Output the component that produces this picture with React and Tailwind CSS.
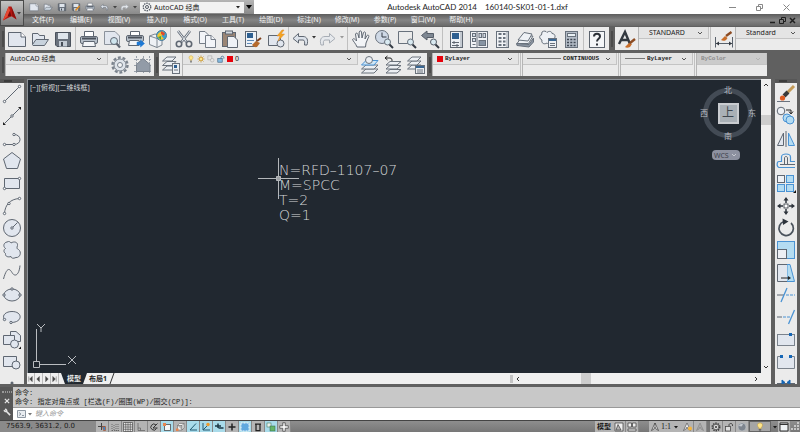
const LINE = '#5f6772'
const FILL = '#e1e6ee'
const BLUE = '#4a93d4'
const SKY = '#b4dcf2'

const icons = {
  new: (
    <g fill={FILL} stroke={LINE}>
      <path d="M1.5 3.5H14L18.5 8V17.5H1.5Z" />
      <path d="M14 3.5V8H18.5" fill="#fff" />
    </g>
  ),
  open: (
    <g fill={FILL} stroke={LINE}>
      <path d="M2.5 15.5V4.5H8L9.5 6.5H14.5V10" />
      <path d="M2.5 15.5L6 10.5H18.5L14.5 16.5H3Z" fill="#c8d2dc" />
    </g>
  ),
  save: (
    <g>
      <path d="M2.5 3.5H17.5V17.5H4L2.5 16Z" fill="#69717c" stroke="#4b525d" />
      <path d="M5 4H15V10H5Z" fill="#dfe5ec" />
      <path d="M6 12H14V17.5H6Z" fill="#c3cbd4" />
      <path d="M8 13H10V17H8Z" fill="#454c56" />
    </g>
  ),
  saveAs: (
    <g>
      <path d="M2.5 3.5H17.5V17.5H4L2.5 16Z" fill="#69717c" stroke="#4b525d" />
      <path d="M5 4H15V10H5Z" fill="#dfe5ec" />
      <path d="M6 12H14V17.5H6Z" fill="#c3cbd4" />
      <path d="M9 17L17 8" stroke="#e08a1e" strokeWidth="3" />
    </g>
  ),
  print: (
    <g stroke={LINE}>
      <path d="M5.5 8V2.5H14.5V8" fill="#fff" />
      <rect x="1.5" y="7.5" width="17" height="7" rx="1.5" fill="#b9c2cc" />
      <path d="M3 9.5H17" stroke="#4a515b" strokeWidth="2" />
      <path d="M4.5 12.5H15.5L16.5 17.5H3.5Z" fill="#f3f5f8" />
    </g>
  ),
  preview: (
    <g fill={FILL} stroke={LINE}>
      <path d="M2.5 2.5H13L17.5 7V15.5H2.5Z" stroke="#8b929b" />
      <circle cx="12" cy="12" r="3.5" fill="#cfe5ee" />
      <path d="M14.5 14.5L18 18.5" strokeWidth="2.2" />
    </g>
  ),
  publish: (
    <g stroke={LINE}>
      <path d="M5.5 7V2.5H14.5V7" fill="#fff" />
      <rect x="1.5" y="6.5" width="17" height="6" rx="1.5" fill="#b9c2cc" />
      <path d="M3 8.5H17" stroke="#4a515b" strokeWidth="2" />
      <path d="M4.5 11.5H14V16.5H3.5Z" fill="#f3f5f8" />
      <path d="M12 13H15.5V11L19.5 14.5L15.5 18V16H12Z" fill="#1d78d4" stroke="#1d78d4" strokeWidth=".5" />
    </g>
  ),
  globe: (
    <g stroke="#7e8791">
      <path d="M1.5 7L7 5L14 7V16L9 18.5L1.5 15.5Z" fill="#eef1f5" />
      <path d="M1.5 7L9 9.5V18.5M9 9.5L14 7" fill="none" />
      <circle cx="13.5" cy="6.5" r="5" fill="#3ba3cf" stroke="#4c7b9b" />
      <path d="M9 7C10 3 13 2 16 3L13.5 7L16 10L12 11Z" fill="#f1c330" stroke="none" />
      <path d="M13 2L17 4L16 7L13 5Z" fill="#df4b2c" stroke="none" />
      <path d="M10 8L13 7V11Z" fill="#42a443" stroke="none" />
    </g>
  ),
  cut: (
    <g fill="none" stroke={LINE}>
      <path d="M4 2L12.5 13M16 2L7.5 13" stroke="#6b737e" strokeWidth="2.6" />
      <path d="M4 2L12.5 13M16 2L7.5 13" stroke="#e7ebf0" strokeWidth="1" />
      <circle cx="5" cy="15" r="2.7" strokeWidth="1.6" />
      <circle cx="15" cy="15" r="2.7" strokeWidth="1.6" />
    </g>
  ),
  copy: (
    <g fill="#f2f4f8" stroke="#757d88">
      <path d="M2.5 2.5H8L11.5 6V14.5H2.5Z" />
      <path d="M8.5 6.5H14L18.5 10.5V18.5H8.5Z" />
      <path d="M14 6.5V10.5H18.5" />
    </g>
  ),
  paste: (
    <g stroke={LINE}>
      <rect x="2.5" y="3.5" width="13" height="14" fill="#9a8575" />
      <rect x="5.5" y="2" width="7" height="3" fill="#d2d8de" />
      <path d="M7.5 7.5H14L17.5 11V18.5H7.5Z" fill="#eef1f6" />
    </g>
  ),
  match: (
    <g>
      <rect x="2.5" y="2.5" width="11" height="15" fill="#edf1f6" stroke={LINE} />
      <rect x="4" y="4" width="6" height="5" fill="#2d5f91" />
      <path d="M4 11.5H11M4 14.5H9" stroke="#5d88b4" />
      <path d="M9 16L13 12L17 14L14 18C12 18.5 10 17.5 9 16Z" fill="#b66a2c" />
      <path d="M14 12L18 9" stroke="#7e3f1b" strokeWidth="2" />
    </g>
  ),
  block: (
    <g fill={FILL} stroke={LINE}>
      <path d="M2.5 6.5H14.5V16.5H2.5Z" />
      <circle cx="14.5" cy="14.5" r="3.5" />
      <path d="M16 1L11 7H14L12 12L18.5 5H15L18 1Z" fill="#f6a51f" stroke="#d8862a" strokeWidth=".5" />
    </g>
  ),
  undo: <path d="M8.5 4.5L3 9.5L8.5 14V11H13C14.5 11 15 13 14.5 16H17C18.5 11 17 7.5 13 7.5H8.5Z" fill="#dce2ea" stroke={LINE} />,
  redo: <path d="M11.5 4.5L17 9.5L11.5 14V11H7C5.5 11 5 13 5.5 16H3C1.5 11 3 7.5 7 7.5H11.5Z" fill="#e6e9ed" stroke="#a7adb5" />,
  hand: (
    <path
      d="M6 18C5 15 2 12 1.5 10.5C2.5 9 4 10 5.5 12L4.5 5C5 3.5 6.5 4 7 5.5L8 9L8.2 3C8.7 1.5 10.2 1.5 10.5 3L11 9L12.5 3.5C13.2 2.3 14.6 3 14.5 4.2L14 10L16 6.5C17 5.5 18.2 6.5 17.8 7.5L15 14L14.5 18Z"
      fill="#f2f4f7"
      stroke={LINE}
    />
  ),
  zoomTime: (
    <g fill="#cfd9e6" stroke="#68717c">
      <circle cx="8" cy="8" r="6.5" />
      <path d="M8 3.5V8H12.5" fill="none" stroke="#343b45" />
      <circle cx="13.5" cy="13" r="3" fill="#d9eaf2" />
      <path d="M15.5 15.5L19 19" stroke="#343b45" strokeWidth="2" />
    </g>
  ),
  zoomWin: (
    <g fill="none" stroke="#68717c">
      <path d="M1.5 2.5H15.5V14.5H1.5Z" />
      <circle cx="13.5" cy="13" r="3" fill="#d9eaf2" />
      <path d="M15.5 15.5L19 19" stroke="#343b45" strokeWidth="2" />
    </g>
  ),
  zoomPrev: (
    <g fill="#7e8792" stroke="#565e69">
      <path d="M1.5 6.5L7 2V4.5H13.5V8.5H7V11Z" />
      <circle cx="13.5" cy="13" r="3" fill="#d9eaf2" />
      <path d="M15.5 15.5L19 19" stroke="#343b45" strokeWidth="2" />
    </g>
  ),
  props: (
    <g>
      <rect x="4.5" y="2.5" width="12" height="16" fill="#edf1f6" stroke={LINE} />
      <rect x="6" y="4" width="7" height="6" fill="#2d5f91" />
      <path d="M15 3V18" stroke="#9ba3ad" />
      <path d="M6 13.5H13M6 16.5H13M8 12V15M11 15V18" stroke={LINE} />
    </g>
  ),
  design: (
    <g fill="#d4dce5" stroke="#68717c">
      <rect x="1.5" y="2.5" width="17" height="16" fill="#f1f3f6" />
      <rect x="3.5" y="4.5" width="3" height="3" />
      <rect x="3.5" y="9.5" width="3" height="3" />
      <path d="M8 3V18M3.5 15.5H6.5" />
      <rect x="10" y="4.5" width="2.5" height="4" />
      <rect x="14" y="4.5" width="2.500" height="4" />
      <rect x="10" y="11.5" width="6.5" height="5" fill="#8794a3" />
    </g>
  ),
  palette: (
    <g fill="#d4dce5" stroke="#68717c">
      <rect x="4.5" y="2.5" width="12" height="16" fill="#f1f3f6" />
      <path d="M15 3V18" stroke="#9ba3ad" />
      <path d="M6.5 5H9.5M11 5H13.5M6.5 9H9.5M11 9H13.5M6.5 12.5H9.5M11 12.5H13.5M6.5 16H9.5M11 16H13.5" strokeWidth="2" />
    </g>
  ),
  sheets: (
    <g fill="#eef1f5" stroke="#68717c">
      <path d="M2 14.5L7.5 7H18L13.5 14.5Z" />
      <path d="M3 11L9 3.5L17 5L13 12Z" />
      <path d="M1.5 14.5L14 15.5L18.5 9V13L14 18L2 16.5Z" fill="#8b95a2" />
    </g>
  ),
  markup: (
    <g fill="#eef1f5" stroke="#68717c">
      <path d="M4 3C6 1.5 8 2 9 3.5C11 1.5 14 2.5 14 4.5C17 4.5 18 8 16 9.5V14C13 16.5 10 15 9 14C6 16 3 14 4 11C1 10 1 6 3.5 6Z" />
      <rect x="10.5" y="9.5" width="8" height="9" />
      <path d="M11 11H18" stroke="#3a6793" strokeWidth="2" />
      <path d="M12 14.5H17M12 16.5H17" />
    </g>
  ),
  calc: (
    <g stroke="#68717c">
      <rect x="4.5" y="2.5" width="12" height="16" fill="#b4bcc7" />
      <rect x="6.5" y="4.5" width="8" height="3" fill="#e9f0f4" />
      <path d="M6 10.5H15M6 13.5H15M6 16.5H15" stroke="#3f4853" strokeWidth="1.5" strokeDasharray="2 1.3" />
    </g>
  ),
  help: (
    <g>
      <rect x="2.5" y="2.5" width="15" height="16" fill="#f4f6f8" stroke="#5b636d" />
      <path d="M7 7.5C7 3.8 13 3.8 13 7.5C13 9.8 10 9.8 10 12.5" fill="none" stroke="#2c3138" strokeWidth="2" />
      <path d="M9 14.5H11V16.5H9Z" fill="#2c3138" />
    </g>
  ),
  textStyle: (
    <g>
      <path d="M2 15L8 3L13 15M4.5 11H11" fill="none" stroke="#333940" strokeWidth="2.4" />
      <path d="M8 18L12 14L15 15L13 18C11 19 9 19 8 18Z" fill="#c86e2a" />
      <path d="M13 14L18 10" stroke="#8c4b22" strokeWidth="2.4" />
    </g>
  ),
  dimStyle: (
    <g>
      <path d="M1.5 8V18.5M18.5 8V18.5M2 14.5H18" stroke="#59616b" />
      <path d="M2 14.5L5 12.5V16.5ZM18 14.5L15 12.5V16.5Z" fill="#333940" />
      <path d="M7 11L11 7L13.5 9C12 12 9 12.5 7 11Z" fill="#c86e2a" />
      <path d="M12 7L17.5 3" stroke="#8c4b22" strokeWidth="2.4" />
    </g>
  ),
  gear: (
    <g fill="none" stroke="#7b838d">
      <circle cx="10" cy="10" r="7.5" strokeWidth="2.4" strokeDasharray="2.9 1.81" />
      <circle cx="10" cy="10" r="6" fill="#dfe4ea" />
      <circle cx="10" cy="10" r="2.5" fill="#f4f5f6" />
    </g>
  ),
  home: (
    <g stroke="#9aa1ab">
      <path d="M1 4.5H19M1 16.5H19M3.5 1V19M16.5 1V19M1 10.5H19M10.5 1V19" strokeDasharray="2 1" />
      <path d="M3.5 9.5L10 3.5L17 9.5V16.5H3.5Z" fill="#929ba7" stroke="#7b838d" />
    </g>
  ),
  layers: (
    <g fill="#eceff3" stroke="#6a727c">
      <path d="M1.5 15L6 11H15L11 15Z" />
      <path d="M1.5 10.5L6 6.5H15L11 10.5Z" />
      <path d="M1.5 6L6 2H15L11 6Z" />
      <rect x="11.5" y="8.5" width="7" height="10" />
      <rect x="13" y="10" width="3" height="3" fill="#2d5f91" stroke="none" />
      <path d="M13 15H17" />
    </g>
  ),
  layerCur: (
    <g fill="#eceff3" stroke="#6a727c">
      <path d="M1.5 18L6 14H18L14 18Z" />
      <path d="M1.5 14L6 10H18L14 14Z" />
      <path d="M1.5 10L6 5.5H18L14 10Z" fill="#cfe6f6" stroke={BLUE} />
      <circle cx="9" cy="5" r="3.5" />
    </g>
  ),
  layerPrev: (
    <g fill="#eceff3" stroke="#6a727c">
      <path d="M3 18L7 14.5H18L14 18Z" />
      <path d="M3 14L7 10.5H18L14 14Z" />
      <path d="M3 10L7 6.5H18L14 10Z" />
      <path d="M2 3H7C9 3 9 5 9 6M4.5 1L2 3L4.5 5" fill="none" stroke="#222" />
    </g>
  ),
  layerState: (
    <g fill="#eceff3" stroke="#6a727c">
      <path d="M1.5 14L6 10H15L11 14Z" />
      <path d="M1.5 10L6 6H15L11 10Z" />
      <path d="M1.5 6L6 2H15L11 6Z" />
      <rect x="9.5" y="10.5" width="9" height="8" />
      <path d="M10 12H18" stroke="#3a6793" strokeWidth="2" />
      <path d="M11 15H17M11 17H17" />
    </g>
  ),
  workspace: (
    <g fill="none" stroke="#555c66">
      <circle cx="10" cy="10" r="7.5" strokeWidth="2.6" strokeDasharray="2.9 1.81" />
      <circle cx="10" cy="10" r="3" strokeWidth="2" />
    </g>
  ),
  // draw toolbar
  line: (
    <g fill="#fff" stroke={LINE}>
      <path d="M2.5 17.5L17.5 2.5" />
      <circle cx="2.5" cy="17.5" r="1.2" />
      <circle cx="17.5" cy="2.5" r="1.2" />
    </g>
  ),
  xline: (
    <g fill="#fff" stroke={LINE}>
      <path d="M2.5 17.5L17.5 2.5" />
      <circle cx="10" cy="10" r="1.2" />
      <path d="M1 16V19H4ZM16 1H19V4Z" fill="#222" stroke="none" />
    </g>
  ),
  pline: (
    <g fill="none" stroke={LINE}>
      <path d="M2.5 15.5H12C20 15.5 20 5.5 12 5.5" />
      <circle cx="2.5" cy="15.5" r="1.2" fill="#fff" />
      <circle cx="12" cy="15.5" r="1.2" fill="#fff" />
      <circle cx="12" cy="5.5" r="1.2" fill="#fff" />
    </g>
  ),
  polygon: <path d="M10 1.5L18.5 8L15.5 17.5H4.5L1.5 8Z" fill={FILL} stroke={LINE} />,
  rect: (
    <g fill={FILL} stroke={LINE}>
      <path d="M2.5 5.5H17.5V15.5H2.5Z" />
      <circle cx="2.5" cy="15.5" r="1.2" fill="#fff" />
      <circle cx="17.5" cy="5.5" r="1.2" fill="#fff" />
    </g>
  ),
  arc: (
    <g fill="#fff" stroke={LINE}>
      <path d="M2.5 17.5C3 9 8 3 17.5 2.5" fill="none" />
      <circle cx="2.5" cy="17.5" r="1.2" />
      <circle cx="7" cy="7.5" r="1.2" />
      <circle cx="17.5" cy="2.5" r="1.2" />
    </g>
  ),
  circle: (
    <g fill={FILL} stroke={LINE}>
      <circle cx="10" cy="10" r="8.5" />
      <path d="M10 10L15.5 4.5" />
      <circle cx="10" cy="10" r="1.2" />
    </g>
  ),
  cloud: <path d="M5 2C7 .8 8.5 2 9 3C12 1 16 2 15.5 5.500C14.5 8 15 9 16.5 9.5C20 12 18 18 14 17.5C11 19 9 18 9 16.5C6 17.5 3 16.5 3.5 13.5C1 12 2 9 3.5 8.5C.5 6 2 2.5 5 2Z" fill={FILL} stroke={LINE} />,
  spline: <path d="M1.5 16C5 3 8 6 10 9.5C12.5 14 17 13 18 2.5" fill="none" stroke={LINE} />,
  ellipse: (
    <g fill={FILL} stroke={LINE}>
      <ellipse cx="10" cy="10" rx="8" ry="6" />
      <circle cx="10" cy="4" r="1.2" />
      <circle cx="2" cy="10" r="1.2" />
      <circle cx="18" cy="10" r="1.2" />
    </g>
  ),
  ellipseArc: (
    <g fill={FILL} stroke={LINE}>
      <path d="M2 12C0 8 4 4.5 10 4.5C21 4.5 21 15.5 9 15.5" />
      <circle cx="2.5" cy="12.5" r="1.2" />
      <circle cx="9" cy="15.5" r="1.2" />
    </g>
  ),
  insert: (
    <g fill={FILL} stroke={LINE}>
      <path d="M8.5 1.5H14L18.5 5.5V11.5H8.5Z" />
      <path d="M1.5 5.5H12.5V14.5H1.5Z" />
      <circle cx="12.5" cy="14" r="4" />
      <path d="M16.5 19H19V16.5Z" fill="#111" stroke="none" />
    </g>
  ),
  makeBlock: (
    <g fill={FILL} stroke={LINE}>
      <path d="M1.5 4.5H14.5V14.5H1.5Z" />
      <circle cx="14" cy="13" r="4" />
    </g>
  ),
  point: <circle cx="10" cy="10" r="1.5" fill={LINE} />,
  // modify toolbar
  erase: (
    <g>
      <path d="M1 17.5H14" stroke="#6b737e" />
      <path d="M18 2L11 9" stroke="#c39a58" strokeWidth="3" />
      <path d="M12 8L8 12" stroke="#3a3a3a" strokeWidth="4" />
      <circle cx="6.5" cy="14" r="2.6" fill="#dd5a20" />
    </g>
  ),
  copyObj: (
    <g fill="#eef1f5" stroke={LINE}>
      <circle cx="5" cy="5" r="3.8" />
      <circle cx="11" cy="12" r="4" fill={SKY} stroke={BLUE} />
      <circle cx="14" cy="14" r="4" fill={SKY} stroke={BLUE} />
      <path d="M10 4H15V7M13 5.5L15 8L17 5.5" fill="none" stroke="#222" />
    </g>
  ),
  mirror: (
    <g fill={FILL} stroke={LINE}>
      <path d="M10 2V18" />
      <path d="M7.5 4V16.5H1.5Z" />
      <path d="M12.5 4V16.5H18.5Z" fill={SKY} stroke={BLUE} />
    </g>
  ),
  offset: (
    <g fill="none">
      <path d="M19 16.5H3C.5 16 .5 10.5 3 10.5H5.500V6C5.500 2 14.500 2 14.500 6V10.500H19" stroke={BLUE} strokeWidth="1.2" />
      <path d="M19 13.500H4M11.500 13.500V7C11.500 5 8.500 5 8.500 7V13.500" stroke={LINE} />
    </g>
  ),
  array: (
    <g fill={SKY} stroke={BLUE}>
      <rect x="1.5" y="2.5" width="7" height="7" fill="#eef1f5" stroke={LINE} />
      <rect x="10.5" y="2.5" width="7" height="7" />
      <rect x="1.5" y="11.5" width="7" height="7" />
      <rect x="10.5" y="11.5" width="7" height="7" />
      <path d="M17 20H20V17Z" fill="#111" stroke="none" />
    </g>
  ),
  move: (
    <g fill="#2d333b" stroke="#2d333b">
      <path d="M10 4V7M10 13V16M4 10H7M13 10H16" strokeWidth="1.5" />
      <path d="M10 1L12.5 4.5H7.5ZM10 19L12.5 15.5H7.5ZM1 10L4.5 7.5V12.5ZM19 10L15.5 7.5V12.5Z" stroke="none" />
      <rect x="8" y="8" width="4" height="4" fill="#fff" strokeWidth=".8" />
    </g>
  ),
  rotate: (
    <g>
      <path d="M15 5A7.2 7.2 0 1 1 8 3.5" fill="none" stroke="#4a525c" strokeWidth="1.7" />
      <path d="M6.5 .5L12.5 3.5L7 7Z" fill="#2d333b" />
    </g>
  ),
  scale: (
    <g fill={SKY} stroke={BLUE}>
      <rect x="1.5" y="1.5" width="17" height="17" />
      <rect x="1.5" y="9.5" width="9" height="9" fill="#eceff4" stroke={LINE} />
    </g>
  ),
  stretch: (
    <g fill={FILL} stroke={LINE}>
      <path d="M11 1.5H14L18.5 18.5H11Z" fill={SKY} stroke={BLUE} />
      <path d="M11 1.5H1.5V18.5H11" />
      <path d="M5 15H13" stroke="#222" />
      <path d="M12 13L15 15L12 17Z" fill="#222" stroke="none" />
    </g>
  ),
  trim: (
    <g>
      <path d="M1 10H8" stroke={LINE} />
      <path d="M10 10H19" stroke={BLUE} strokeDasharray="3 1" />
      <path d="M5 17L11 3" stroke={BLUE} strokeWidth="1.3" />
    </g>
  ),
  extend: (
    <g>
      <path d="M1 10H6" stroke={LINE} />
      <path d="M7 10H14" stroke={BLUE} strokeDasharray="3 1" />
      <path d="M12.5 17L18.5 3" stroke={BLUE} strokeWidth="1.3" />
    </g>
  ),
  breakPt: (
    <g>
      <rect x="1.5" y="4.5" width="17" height="11" fill={FILL} stroke="#7a828c" />
      <rect x="13" y="3" width="3" height="3" fill="#1566b5" />
    </g>
  ),
  breakObj: (
    <g>
      <path d="M5 4.5H1.5V16.5H18.5V4.5H15" fill={FILL} stroke="#7a828c" />
      <rect x="4" y="3" width="3" height="3" fill="#1566b5" />
      <rect x="13" y="3" width="3" height="3" fill="#1566b5" />
    </g>
  ),
  join: (
    <g>
      <path d="M1 10.5H19" stroke={LINE} />
      <path d="M6 7L9 9.5L6 11ZM14 7L11 9.5L14 11Z" fill="#1566b5" stroke="#1566b5" />
    </g>
  ),
  // status bar
  infer: (
    <g stroke="#444" strokeWidth="2">
      <path d="M9 2V16M2 9H16" />
      <path d="M11 9H17V17H13Z" fill="#3a86c8" stroke="#b4552c" strokeWidth="1.500" />
    </g>
  ),
  snap: <path d="M4 4V18M8 6V18M12 4V18M16 4V18M4 17H18" stroke="#555" strokeWidth="1.5" strokeDasharray="2 2" />,
  grid: <path d="M1 1H19V19H1ZM5.500 1V19M10 1V19M14.500 1V19M1 5.500H19M1 10H19M1 14.500H19" fill="#eee" stroke="#444" strokeWidth="1.300" />,
  ortho: <path d="M4 2V17H18M4 12H9V17" fill="none" stroke="#666" strokeWidth="1.5" />,
  polar: (
    <g fill="none" stroke="#333" strokeWidth="2">
      <path d="M14 6A6 6 0 1 0 15 13M8 12L17 3M8 12H17" />
    </g>
  ),
  osnap: (
    <g>
      <rect x="5" y="5" width="12" height="12" fill="#f5f5f5" stroke="#444" strokeWidth="1.5" />
      <rect x="2" y="2" width="6" height="6" fill="#e8854e" />
    </g>
  ),
  osnap3d: (
    <g stroke="#555" fill="#f0f0f0">
      <path d="M5 7L9 3H18V12L14 16H5ZM14 16V7H5M14 7L18 3" />
      <rect x="2" y="13" width="5" height="5" fill="#e8854e" stroke="none" />
    </g>
  ),
  track: <path d="M16 3L4 16H18" fill="none" stroke="#225b72" strokeWidth="2" />,
  ducs: (
    <g fill="none">
      <path d="M4 2V16H18M4 16L12 8" stroke="#225b72" strokeWidth="2" />
      <circle cx="14" cy="5" r="3.5" fill="#ee9b2b" />
    </g>
  ),
  dyn: <path d="M2 8H14M8 3V12M9 12H19" stroke="#1b3845" strokeWidth="3" />,
  lwt: <path d="M10 3V17M3 10H17" stroke="#222" strokeWidth="3" />,
  trans: <rect x="2" y="2" width="16" height="16" fill="#5fa9df" stroke="#f4f8fb" strokeWidth="2" strokeDasharray="2 1" />,
  quick: <path d="M4 4H16M6 5V17H14V5" fill="none" stroke="#222" strokeWidth="2.5" />,
  cycle: (
    <g stroke="#33684a">
      <rect x="2" y="2" width="8" height="8" fill="#e9f2ee" />
      <rect x="8" y="8" width="10" height="10" fill="#65b568" />
    </g>
  ),
  monitor: <path d="M7.500 1.500H12.500V7.500H18.500V12.500H12.500V18.500H7.500V12.500H1.500V7.500H7.500Z" fill="#f4f4f4" stroke="#444" strokeWidth="1.500" />,
  layout: <path d="M2 2H18V18H2ZM4 16L14 16L8 5Z" fill="#eee" stroke="#444" strokeWidth="1.5" />,
  views: <path d="M2 2H9V10H2ZM11 2H18V10H11ZM2 14H18V18H2Z" fill="#eee" stroke="#444" strokeWidth="1.5" />,
  anno: <path d="M10 2L3 17L8 14L10 10L12 14L17 17ZM10 2V10" fill="#eee" stroke="#333" strokeWidth="1.3" />,
  annoSun: (
    <g>
      <path d="M10 2L3 17L8 14L10 10L12 14L17 17Z" fill="#eee" stroke="#333" />
      <circle cx="16" cy="13" r="4" fill="#f5b53d" />
    </g>
  ),
  annoOff: <path d="M10 2L3 17L8 14L10 10L12 14L17 17Z" fill="#aaa" stroke="#777" />,
  cog: (
    <g stroke="#3c3c3c">
      <circle cx="10" cy="10" r="7.5" strokeWidth="3" strokeDasharray="2.9 1.81" />
      <circle cx="10" cy="10" r="5.500" fill="#ededed" strokeWidth="1.500" />
      <circle cx="10" cy="10" r="2" fill="#555" />
    </g>
  ),
  unlock: (
    <g>
      <path d="M10 9V6C10 2 17 2 17 6V8" fill="none" stroke="#444" strokeWidth="2" />
      <rect x="3" y="9" width="10" height="9" fill="#ddd" stroke="#444" strokeWidth="1.5" />
    </g>
  ),
  sphere: (
    <g>
      <circle cx="10" cy="10" r="8" fill="#7e858e" stroke="#c9ccd0" />
      <path d="M4 8C5 4 10 3 12 5L9 9Z" fill="#c3c8ce" />
    </g>
  ),
  bulb: (
    <g>
      <path d="M10 2C4 2 4 8 7.5 11V13H12.5V11C16 8 16 2 10 2Z" fill="#fde58c" stroke="#c09429" />
      <path d="M7.5 15.5H12.5M8.5 18H11.5" stroke="#555" strokeWidth="2" />
    </g>
  ),
  clean: <path d="M2 2H18V18H2ZM2 5H18" fill="#eef1f4" stroke="#333" strokeWidth="2" />,
  sun: (
    <g stroke="#c58b17" strokeWidth="1.5">
      <path d="M10 1V19M1 10H19M3.5 3.5L16.5 16.5M16.5 3.5L3.5 16.5" />
      <circle cx="10" cy="10" r="4.5" fill="#fde58c" />
    </g>
  ),
  freeze: (
    <g fill="#e4e4e4" stroke="#aaa" strokeWidth="1.5">
      <path d="M2 2H12V12H2Z" />
      <circle cx="13" cy="13" r="4.5" />
    </g>
  ),
  lockBlue: (
    <g>
      <path d="M10 9V6C10 2 17 2 17 6V9" fill="none" stroke="#3f6e93" strokeWidth="2" />
      <rect x="2" y="9" width="11" height="9" fill="#86bbe0" stroke="#31597a" strokeWidth="1.5" />
    </g>
  ),
}

function Icon({ name, className = 'size-5' }) {
  return (
    <svg viewBox="0 0 20 20" className={`${className} shrink-0`} fill="none" aria-hidden="true">
      {icons[name]}
    </svg>
  )
}

function Tool({ name, className = 'w-[23px]' }) {
  return (
    <button aria-label={name} className={`${className} flex h-full shrink-0 items-center justify-center`}>
      <Icon name={name} />
    </button>
  )
}

function Caret({ className }) {
  return (
    <svg viewBox="0 0 6 4" className={`${className} h-1 w-1.5 shrink-0`} fill="currentColor" aria-hidden="true">
      <path d="M0 0H6L3 4Z" />
    </svg>
  )
}

function SmallCaret({ className = '' }) {
  return (
    <svg viewBox="0 0 8 8" className={`${className} size-2 shrink-0`} fill="currentColor" aria-hidden="true">
      <path d="M2 3H6L4 5.5Z" />
    </svg>
  )
}

function Chevron({ className = '' }) {
  return (
    <svg viewBox="0 0 8 8" className={`${className} size-2 shrink-0`} fill="none" stroke="currentColor" aria-hidden="true">
      <path d="M2 3L4 5L6 3" />
    </svg>
  )
}

const Sep = () => <div className="mx-px h-full w-px shrink-0 bg-[#c0c0c0]" />

const Grip = ({ className = 'w-[5px]' }) => (
  <div className={`${className} flex shrink-0 items-center justify-center self-stretch bg-[#606060]`}>
    <div className="h-4 w-[2px] bg-[#4b4b4b]" />
  </div>
)

const UI = 'text-[7px]'
const MONO = "font-['Liberation_Mono','Noto_Sans_CJK_SC',monospace] text-[6px] font-bold"

function Drop({ label, value, children, font = UI, className = '', disabled = false }) {
  return (
    <div className="h-full shrink-0 border-l border-[#b5b5b5] bg-[#ebebeb]">
      <div
        className={`${className} flex h-3 items-center gap-0.5 border-r border-b border-[#c4c4c4] pr-1 pl-1 ${
          disabled ? 'bg-[#cbcbcb] text-[#8d8d8d]' : 'bg-[#e4e4e4] text-[#1c1c1c]'
        }`}
      >
        {children}
        <select aria-label={label} disabled={disabled} className={`${font} min-w-0 flex-1 appearance-none bg-transparent leading-3`}>
          <option>{value}</option>
        </select>
        <Chevron className={disabled ? 'text-[#b3b3b3]' : 'text-[#555]'} />
      </div>
    </div>
  )
}

const menus = ['文件(F)', '编辑(E)', '视图(V)', '插入(I)', '格式(O)', '工具(T)', '绘图(D)', '标注(N)', '修改(M)', '参数(P)', '窗口(W)', '帮助(H)']

const drawTools = ['line', 'xline', 'pline', 'polygon', 'rect', 'arc', 'circle', 'cloud', 'spline', 'ellipse', 'ellipseArc', 'insert', 'makeBlock', 'point']
const modifyTools = ['erase', 'copyObj', 'mirror', 'offset', 'array', 'move', 'rotate', 'scale', 'stretch', 'trim', 'extend', 'breakPt', 'breakObj', 'join']

const statusTools = [
  ['infer'], ['snap'], ['grid'], ['ortho'], ['polar'], ['osnap', true], ['osnap3d'], ['track', true],
  ['ducs', true], ['dyn', true], ['lwt'], ['trans', true], ['quick'], ['cycle', true], ['monitor'],
]

function Header() {
  return (
    <header className="flex h-[26px] shrink-0">
      <button aria-label="AutoCAD" className="flex w-6 shrink-0 items-center border border-[#4a4a4a] bg-gradient-to-b from-[#c4c4c4] to-[#808080] pl-px">
        <svg viewBox="0 0 16 18" className="h-[18px] w-4" aria-hidden="true">
          <path d="M7 2H10L15.500 16L10 12.500L1 17Z" fill="#b81712" />
          <path d="M7 2L1 17L6 12.500L8.500 6Z" fill="#e34832" />
          <path d="M8.500 7L10 12.500H6Z" fill="#6f0d0b" />
          <path d="M10 2L15.500 16L11 12Z" fill="#8c100d" />
        </svg>
        <SmallCaret className="-ml-0.5 text-[#444]" />
      </button>
      <div className="flex min-w-0 flex-1 flex-col">
        <div className="flex h-3.5 bg-white">
          <div className="flex w-[230px] shrink-0 items-center bg-gradient-to-b from-[#b5b5b5] to-[#8a8a8a] pl-[3px]">
            {['new', 'open', 'save', 'saveAs', 'print', 'undo'].map((n) => (
              <button key={n} aria-label={n} className="flex w-3.5 shrink-0 justify-center">
                <Icon name={n} className="size-2.5" />
              </button>
            ))}
            <SmallCaret className="text-[#444]" />
            <button aria-label="redo" className="flex w-3 shrink-0 justify-center">
              <Icon name="redo" className="size-2.5" />
            </button>
            <SmallCaret className="text-[#444]" />
            <label className="ml-px flex h-[11px] min-w-0 flex-1 items-center gap-0.5 bg-[#f2f2f2] px-0.5 text-[#222]">
              <Icon name="workspace" className="size-2.5" />
              <select aria-label="工作空间" className="min-w-0 flex-1 appearance-none bg-transparent text-[7px] leading-[11px]">
                <option>AutoCAD 经典</option>
              </select>
              <SmallCaret />
            </label>
            <Caret className="mx-0.5" />
          </div>
          <div className="flex flex-1 items-center justify-center gap-2 pr-7 font-['Lato',sans-serif] text-[8px] text-[#222]">
            <span>Autodesk AutoCAD 2014</span>
            <span>160140-SK01-01-1.dxf</span>
          </div>
          <div className="flex shrink-0 items-center gap-5 pr-2.5 text-[#888]">
            <button aria-label="最小化">
              <svg viewBox="0 0 7 7" className="size-[7px]" stroke="currentColor"><path d="M0 3.5H7" /></svg>
            </button>
            <button aria-label="还原">
              <svg viewBox="0 0 7 7" className="size-[7px]" fill="none" stroke="currentColor"><path d="M.5 2.5H4.5V6.5H.5ZM2.5 2V.5H6.5V4.5H5" /></svg>
            </button>
            <button aria-label="关闭">
              <svg viewBox="0 0 7 7" className="size-[7px]" stroke="currentColor"><path d="M.5 .5L6.5 6.5M6.5 .5L.5 6.5" /></svg>
            </button>
          </div>
        </div>
        <nav className="flex h-3 items-center bg-gradient-to-b from-[#5d5d5d] via-[#858585] to-[#6a6a6a] text-[7px] text-[#f2f2f2]">
          {menus.map((m) => (
            <button key={m} className="w-[38px] shrink-0 text-center leading-3 whitespace-nowrap">{m}</button>
          ))}
          <div className="ml-auto flex items-center gap-[3px] pr-1 text-[#1f1f1f]">
            <button aria-label="最小化文档">
              <svg viewBox="0 0 7 7" className="size-[7px]" stroke="currentColor"><path d="M1 5.5H6" strokeWidth="1.5" /></svg>
            </button>
            <button aria-label="还原文档">
              <svg viewBox="0 0 7 7" className="size-[7px]" fill="none" stroke="currentColor"><path d="M.5 2.5H4.5V6.5H.5ZM2.5 2V.5H6.5V4.5H5" /></svg>
            </button>
            <button aria-label="关闭文档">
              <svg viewBox="0 0 7 7" className="size-[7px]" stroke="currentColor"><path d="M1 1L6 6M6 1L1 6" strokeWidth="1.5" /></svg>
            </button>
          </div>
        </nav>
      </div>
    </header>
  )
}

function StandardBar() {
  return (
    <div className="mt-px flex h-[23px] shrink-0 items-center overflow-hidden bg-[#ebebeb]">
      <Grip />
      {['new', 'open', 'save'].map((n) => <Tool key={n} name={n} />)}
      <Sep />
      {['print', 'preview', 'publish', 'globe'].map((n) => <Tool key={n} name={n} />)}
      <Sep />
      {['cut', 'copy', 'paste', 'match', 'block'].map((n) => <Tool key={n} name={n} />)}
      <Sep />
      <Tool name="undo" className="w-5" />
      <SmallCaret className="mb-1 text-[#333]" />
      <Tool name="redo" className="w-5" />
      <SmallCaret className="mb-1 text-[#999]" />
      <Sep />
      {['hand', 'zoomTime', 'zoomWin', 'zoomPrev'].map((n) => <Tool key={n} name={n} />)}
      <Sep />
      {['props', 'design', 'palette', 'sheets', 'markup', 'calc'].map((n) => <Tool key={n} name={n} />)}
      <Sep />
      <Tool name="help" className="w-6" />
      <Grip className="w-1.5" />
      <Tool name="textStyle" />
      <Drop label="文字样式" value="STANDARD" className="w-[70px] pl-2.5" />
      <Sep />
      <Tool name="dimStyle" />
      <div className="h-full min-w-[67px] flex-1">
        <Drop label="标注样式" value="Standard" className="w-full pl-2.5" />
      </div>
    </div>
  )
}

function LayerBar() {
  return (
    <div className="my-[3px] flex h-[23px] shrink-0 items-center overflow-hidden">
      <Grip />
      <div className="flex h-full shrink-0 items-center bg-[#ebebeb]">
        <Drop label="工作空间" value="AutoCAD 经典" className="w-[102px]" />
        <Tool name="gear" />
        <Tool name="home" />
      </div>
      <Grip />
      <div className="flex h-full shrink-0 items-center bg-[#ebebeb]">
        <Tool name="layers" />
        <Drop label="图层" value="0" className="w-[175px]">
          <Icon name="bulb" className="size-2" />
          <Icon name="sun" className="size-2" />
          <Icon name="freeze" className="size-2" />
          <Icon name="lockBlue" className="size-2" />
          <span className="size-1.5 shrink-0 bg-red-600" />
        </Drop>
        <Tool name="layerCur" />
        <Tool name="layerPrev" />
        <Tool name="layerState" />
      </div>
      <Grip />
      <div className="flex h-full shrink-0 items-center bg-[#ebebeb]">
        <Drop label="颜色" value="ByLayer" font={MONO} className="w-[86px]">
          <span className="size-1.5 shrink-0 bg-red-600" />
        </Drop>
        <Sep />
        <Drop label="线型" value="CONTINUOUS" font={MONO} className="w-[94px]">
          <span className="h-px w-[34px] shrink-0 bg-[#777]" />
        </Drop>
        <Sep />
        <Drop label="线宽" value="ByLayer" font={MONO} className="w-[72px]">
          <span className="h-px w-5 shrink-0 bg-[#777]" />
        </Drop>
        <Sep />
        <Drop label="打印样式" value="ByColor" font={MONO} className="w-[70px]" disabled />
      </div>
    </div>
  )
}

function SideBar({ tools, className }) {
  return (
    <aside className={`${className} flex shrink-0 flex-col overflow-hidden bg-[#ebebeb]`}>
      <div className="flex h-1 shrink-0 items-center bg-[#575757] pl-1">
        <div className="h-0.5 w-2 bg-[#3c3c3c]" />
      </div>
      {tools.map((n, i) => (
        <button
          key={n}
          aria-label={n}
          className={i < tools.length - 1 ? 'flex min-h-0 flex-1 items-center justify-center' : 'flex h-[11px] items-start justify-center'}
        >
          <Icon name={n} />
        </button>
      ))}
    </aside>
  )
}

function ViewCube() {
  return (
    <div className="absolute top-2 right-2 flex w-[50px] flex-col items-center text-[8px] text-[#b9bdc2]">
      <div className="relative flex size-[50px] items-center justify-center">
        <div className="absolute inset-0 rounded-full border-[5px] border-[#434b55]" />
        <span className="absolute -top-[3px] leading-[10px]">北</span>
        <span className="absolute -bottom-[3px] leading-[10px]">南</span>
        <span className="absolute -left-[3px] leading-[10px]">西</span>
        <span className="absolute -right-[3px] leading-[10px]">东</span>
        <button className="flex size-[21px] items-center justify-center border-2 border-[#c9ccd0] bg-[#a9b0b6] text-xs leading-none text-[#3e464f]">
          上
        </button>
      </div>
      <button className="mt-3 mr-1 flex h-2.5 w-7 items-center justify-between rounded-sm bg-[#8d91a0] px-0.5 text-[7px] leading-none text-[#3e424c]">
        WCS
        <Chevron className="text-[#c5c8d0]" />
      </button>
    </div>
  )
}

function Viewport() {
  return (
    <div className="relative min-h-0 flex-1 overflow-hidden border-t border-l border-[#8d9298] bg-[#212830]">
      <div className="p-1 pl-0.5 text-[7px] leading-2 text-[#d5d7da]">[−][俯视][二维线框]</div>
      <div className="absolute top-[83px] left-[251px] font-['DejaVu_Sans',sans-serif] text-sm leading-[15px] font-extralight text-[#d6d8da]">
        <p>N=RFD–1107–07</p>
        <p>M=SPCC</p>
        <p>T=2</p>
        <p>Q=1</p>
      </div>
      <svg viewBox="0 0 41 41" className="absolute top-[78px] left-[230px] size-[41px]" fill="none" stroke="#b4b7ba" aria-hidden="true">
        <path d="M0 20.5H41M20.5 0V41" />
        <path d="M18.5 18.5H22.5V22.5H18.5Z" fill="#9fa3a7" />
      </svg>
      <svg viewBox="0 0 46 44" className="absolute bottom-[3px] left-1 h-11 w-[46px]" fill="none" stroke="#b9bcc0" aria-hidden="true">
        <path d="M4.5 3V35M8 38.5H34" />
        <path d="M1.5 35.5H7.5V41.5H1.5Z" />
      </svg>
      <svg viewBox="0 0 10 10" className="absolute bottom-10 left-2 size-2.5" fill="none" stroke="#b9bcc0" aria-hidden="true">
        <path d="M1 1L5 5L9 1M5 5V9" />
      </svg>
      <svg viewBox="0 0 10 10" className="absolute bottom-2 left-[39px] size-2.5" fill="none" stroke="#b9bcc0" aria-hidden="true">
        <path d="M1 1L9 9M9 1L1 9" />
      </svg>
      <ViewCube />
    </div>
  )
}

function ModelTabs() {
  return (
    <div className="flex h-[11px] shrink-0 items-center bg-[#efefef] text-[7px] text-[#222]">
      {['M6 1V7L3 4ZM2 1V7', 'M5 1V7L2 4Z', 'M3 1V7L6 4Z', 'M2 1V7L5 4ZM6 1V7'].map((d) => (
        <button key={d} aria-label="布局导航" className="flex h-full w-2 shrink-0 items-center border-r border-[#bbb]">
          <svg viewBox="0 0 8 8" className="size-2" fill="#444" stroke="#444" strokeWidth=".5"><path d={d} /></svg>
        </button>
      ))}
      <button className="relative ml-0.5 h-full w-[26px] leading-[11px] font-bold text-[#e8e8e8]">
        <svg viewBox="0 0 26 11" preserveAspectRatio="none" className="absolute inset-0 size-full" aria-hidden="true"><path d="M0 0H26L22 11H4Z" fill="#212830" /></svg>
        <span className="relative">模型</span>
      </button>
      <button className="flex h-full items-center pl-0.5 leading-[11px] font-bold">
        布局1
        <svg viewBox="0 0 6 11" className="ml-0.5 h-[11px] w-1.5" stroke="#333"><path d="M1 11L5 0" /></svg>
      </button>
      <div className="ml-auto flex h-full w-[261px] items-center">
        <div className="h-2 w-[3px] bg-[#c4c4c4]" />
        <Chevron className="ml-px rotate-90 text-[#333]" />
        <div className="ml-[59px] h-full w-2.5 bg-[#cdcdcd]" />
        <Chevron className="mr-[11px] ml-auto -rotate-90 text-[#333]" />
      </div>
    </div>
  )
}

function CommandLine() {
  return (
    <section className="flex h-[33px] shrink-0 bg-[#c8c8c8] font-['Liberation_Mono','Noto_Sans_CJK_SC',monospace] text-[7px] text-[#1d1d1d]">
      <div className="flex w-[13px] shrink-0 flex-col items-center justify-between bg-[#575757] py-1 text-[#e6e6e6]">
        <div className="h-0.5 w-2.5 border-y border-dotted border-[#999]" />
        <button aria-label="关闭">
          <svg viewBox="0 0 7 7" className="size-1.5" stroke="currentColor" strokeWidth="1.5"><path d="M1 1L6 6M6 1L1 6" /></svg>
        </button>
        <button aria-label="自定义">
          <svg viewBox="0 0 9 9" className="size-2" fill="none" stroke="currentColor" strokeWidth="1.8"><path d="M4 4L8 8M1 2.5L2.5 4H4V2.5L2.5 1" /></svg>
        </button>
      </div>
      <div className="flex min-w-0 flex-1 flex-col">
        <div className="flex-1 pt-0.5 pl-0.5 leading-[9px]">
          <p>命令:</p>
          <p>命令: 指定对角点或 [栏选(F)/圈围(WP)/圈交(CP)]:</p>
        </div>
        <div className="flex h-[13px] items-center border-t border-[#999] bg-white pl-1">
          <svg viewBox="0 0 9 8" className="h-2 w-[9px]" fill="#e8ecf0" stroke="#8e98a3"><path d="M.5 .5H8.5V7.5H.5ZM2 2.5L4 4L2 5.5M5 5.5H7" /></svg>
          <SmallCaret className="text-[#777]" />
          <input aria-label="命令" placeholder="键入命令" className="ml-px min-w-0 flex-1 bg-transparent text-[7px] leading-3 italic outline-none placeholder:text-[#999]" />
        </div>
      </div>
    </section>
  )
}

function StatusButton({ name, active }) {
  return (
    <button
      aria-label={name}
      className={`flex h-full w-[13px] shrink-0 items-center justify-center border-r border-[#888] ${active ? 'bg-[#a9dbea]' : 'bg-[#b4b4b4]'}`}
    >
      <Icon name={name} className="size-2.5" />
    </button>
  )
}

function StatusBar() {
  return (
    <footer className="flex h-3 shrink-0 items-center border-t border-[#444] bg-gradient-to-b from-[#8e8e8e] to-[#777] text-[7px] text-[#1a1a1a]">
      <div className="flex h-full w-24 shrink-0 items-center bg-[#8a8a8a] pl-1.5 font-['DejaVu_Sans',sans-serif]">7563.9, 3631.2, 0.0</div>
      {statusTools.map(([name, active]) => <StatusButton key={name} name={name} active={active} />)}
      <div className="ml-auto flex h-full items-center">
        <button className="h-full w-[18px] bg-[#b4b4b4] leading-[11px] font-bold">模型</button>
        <StatusButton name="layout" />
        <StatusButton name="views" />
        <button className="ml-2.5 flex h-full w-8 items-center justify-center gap-px bg-[#b4b4b4] font-['Liberation_Serif',serif] text-[8px] leading-[11px]">
          <Icon name="anno" className="size-2.5" />
          1:1
          <SmallCaret />
        </button>
        <StatusButton name="annoSun" />
        <StatusButton name="annoOff" />
        <div className="h-full w-[3px] bg-[#777]" />
        <StatusButton name="cog" />
        <StatusButton name="unlock" />
        <StatusButton name="sphere" />
        <button aria-label="隔离对象" className="flex h-full w-[22px] items-center justify-center border border-[#666] bg-[#a5a5a5]">
          <Icon name="bulb" className="size-2.5" />
        </button>
        <SmallCaret className="-mr-px" />
        <StatusButton name="clean" />
        <svg viewBox="0 0 9 9" className="size-[9px]" fill="#c6c6c6" aria-hidden="true">
          <path d="M6 0H8V2H6ZM3 3H5V5H3ZM6 3H8V5H6ZM0 6H2V8H0ZM3 6H5V8H3ZM6 6H8V8H6Z" />
        </svg>
      </div>
    </footer>
  )
}

export default function App() {
  return (
    <div className="flex h-screen min-w-0 flex-col overflow-hidden bg-[#606060] font-['Noto_Sans','Noto_Sans_CJK_SC',sans-serif]">
      <Header />
      <StandardBar />
      <LayerBar />
      <main className="flex min-h-0 flex-1 pb-[3px]">
        <SideBar tools={drawTools} className="w-6" />
        <div className="ml-[3px] flex min-w-0 flex-1 flex-col">
          <div className="flex min-h-0 flex-1">
            <Viewport />
            <div className="flex w-2.5 shrink-0 flex-col items-center bg-[#efefef] py-0.5 text-[#333]">
              <Chevron className="rotate-180" />
              <div className="mt-[26px] h-2.5 w-full bg-[#cdcdcd]" />
              <Chevron className="mt-auto" />
            </div>
          </div>
          <ModelTabs />
        </div>
        <SideBar tools={modifyTools} className="mr-[3px] ml-1 w-[22px]" />
      </main>
      <CommandLine />
      <StatusBar />
    </div>
  )
}
